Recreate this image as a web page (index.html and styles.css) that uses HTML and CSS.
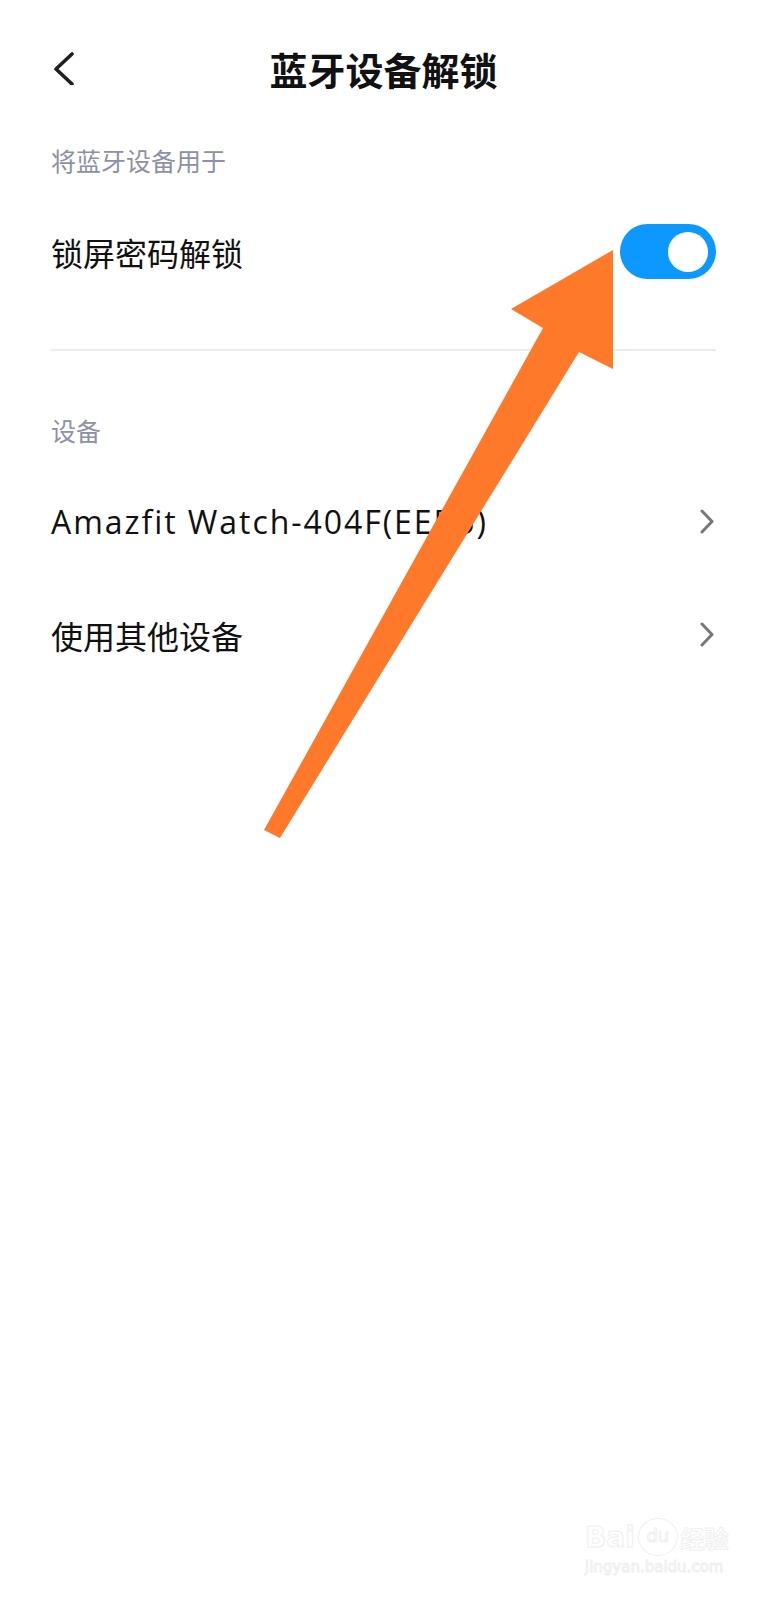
FILE: index.html
```html
<!DOCTYPE html>
<html lang="zh-CN">
<head>
    <meta charset="UTF-8">
    <meta name="viewport" content="width=device-width, initial-scale=1.0">
    <title>蓝牙设备解锁</title>
    <link rel="stylesheet" href="styles.css">
</head>
<body>
    <div class="page">
        <div class="header">
            <div class="back">
                <svg width="24" height="36" viewBox="0 0 24 36">
                    <path d="M20 5 L4 20 L20 35" fill="none" stroke="#1f1f1f" stroke-width="3.6" stroke-linecap="round" stroke-linejoin="round"/>
                </svg>
            </div>
            <h1 class="title">蓝牙设备解锁</h1>
            <div></div>
        </div>

        <div class="group-title">将蓝牙设备用于</div>
        <div class="row">
            <span class="label">锁屏密码解锁</span>
            <span class="switch on"><span class="knob"></span></span>
        </div>

        <div class="divider"></div>

        <div class="group-title second">设备</div>
        <div class="row">
            <span class="label latin">Amazfit Watch-404F(EEB5)</span>
            <svg class="chevron" width="14" height="26" viewBox="0 0 14 26">
                <path d="M2 2 L12 12.5 L2 23" fill="none" stroke="#777" stroke-width="3" stroke-linecap="round" stroke-linejoin="round"/>
            </svg>
        </div>
        <div class="row">
            <span class="label">使用其他设备</span>
            <svg class="chevron" width="14" height="26" viewBox="0 0 14 26">
                <path d="M2 2 L12 12.5 L2 23" fill="none" stroke="#777" stroke-width="3" stroke-linecap="round" stroke-linejoin="round"/>
            </svg>
        </div>

        <!-- annotation arrow drawn over the screenshot -->
        <svg class="arrow" width="765" height="900" viewBox="0 0 765 900">
            <polygon points="613,250 613,369 579,352 280,838 264,830 543,328 511,309" fill="#ff792b"/>
        </svg>

        <div class="watermark">
            <div class="wm-top">
                <span class="wm-bai">Bai</span>
                <span class="wm-paw">du</span>
                <span class="wm-cn">经验</span>
            </div>
            <div class="wm-url">jingyan.baidu.com</div>
        </div>
    </div>
</body>
</html>
```

FILE: styles.css
```css
body {
    margin: 0;
    background-color: #ffffff;
    font-family: "Noto Sans CJK SC", "Noto Sans", sans-serif;
    color: #111111;
}

.page {
    position: relative;
    width: 765px;
    min-height: 1600px;
    padding: 0 49px 0 51px;
    box-sizing: border-box;
}

.header {
    height: 136px;
    display: grid;
    grid-template-columns: 1fr auto 1fr;
    align-items: center;
    margin: 0 -49px 0 -51px;
    padding: 0 49px 0 51px;
}

.back {
    display: flex;
    align-items: center;
}

.back svg {
    display: block;
    margin-left: 1px;
    margin-top: -2px;
}

.title {
    margin: 0;
    font-size: 38px;
    font-weight: 700;
    letter-spacing: 0;
    color: #111111;
}

.group-title {
    height: 48px;
    line-height: 48px;
    font-size: 25px;
    color: #8d90a7;
    margin-bottom: 11px;
}

.group-title.second {
    margin-top: 55px;
}

.row {
    height: 113px;
    display: flex;
    align-items: center;
    justify-content: space-between;
}

.label {
    font-size: 32px;
    color: #111111;
}

.label.latin {
    font-family: "Open Sans", "Noto Sans CJK SC", sans-serif;
    letter-spacing: 1.95px;
}

.switch {
    width: 96px;
    height: 55px;
    border-radius: 28px;
    background-color: #0d98ff;
    display: flex;
    align-items: center;
    justify-content: flex-end;
    padding: 0 8px;
    box-sizing: border-box;
}

.knob {
    width: 40px;
    height: 40px;
    border-radius: 50%;
    background-color: #ffffff;
}

.chevron {
    display: block;
    margin-right: 2px;
}

.divider {
    height: 2px;
    background-color: #ececec;
    margin-top: 41px;
}

.arrow {
    position: absolute;
    top: 0;
    left: 0;
    pointer-events: none;
}

.watermark {
    position: absolute;
    left: 585px;
    top: 1518px;
    color: #ffffff;
    -webkit-text-stroke: 1px #efefef;
    font-family: "DejaVu Sans", sans-serif;
}

.wm-top {
    display: flex;
    align-items: center;
}

.wm-bai {
    font-size: 28px;
    font-weight: 700;
}

.wm-paw {
    width: 38px;
    height: 36px;
    margin: 0 3px;
    border: 1px solid #efefef;
    border-radius: 50%;
    font-size: 18px;
    text-align: center;
    line-height: 34px;
}

.wm-cn {
    font-family: "Noto Sans CJK SC", sans-serif;
    font-size: 24px;
    font-weight: 700;
}

.wm-url {
    font-size: 15px;
    margin-top: 2px;
}
```
